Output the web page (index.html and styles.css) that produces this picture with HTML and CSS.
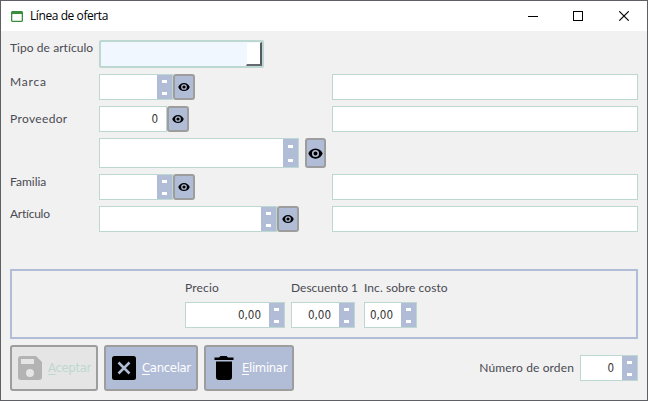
FILE: index.html
```html
<!DOCTYPE html>
<html lang="es">
<head>
<meta charset="utf-8">
<title>Línea de oferta</title>
<link rel="stylesheet" href="styles.css">
</head>
<body>
<svg width="0" height="0" class="defs">
  <symbol id="eye" viewBox="0 0 24 24"><path fill-rule="evenodd" d="M12 3.8C6.5 3.8 2.2 7.3 0.5 12c1.7 4.7 6 8.2 11.5 8.2s9.800-3.500 11.500-8.200C21.800 7.300 17.500 3.800 12 3.800zM12 17.700a5.700 5.700 0 1 1 0-11.400 5.700 5.700 0 0 1 0 11.400zM12 8.800a3.200 3.200 0 1 0 0 6.400 3.200 3.200 0 0 0 0-6.400z"/></symbol>
</svg>
<div class="window">
  <header class="titlebar">
    <svg class="app-icon" width="12" height="11" viewBox="0 0 12 11"><path fill="#388e3c" fill-rule="evenodd" d="M1 0h10l1 1v9l-1 1H1l-1-1V1zM1.300 3v6.700h9.400V3z"/></svg>
    <span class="title">Línea de oferta</span>
    <svg class="controls" width="102" height="10" viewBox="0 0 102 10" fill="none" stroke="#000">
      <path d="M0 5.500h10" shape-rendering="crispEdges"/><path d="M45.500.5h9v9h-9z" shape-rendering="crispEdges"/><path d="M91.300.3l9.400 9.400M100.700.3l-9.400 9.400" stroke-width="1.100"/>
    </svg>
  </header>
  <main class="form">
    <div class="row combo-row"><label class="w-tipo">Tipo de artículo</label><div class="combo"><i></i></div></div>
    <div class="row"><label class="w-marca">Marca</label><div class="field f74"><i class="spin"></i></div><button class="look"><svg><use href="#eye"/></svg></button><div class="field wide"></div></div>
    <div class="row"><label class="w-prov">Proveedor</label><div class="field f68"><span>0</span></div><button class="look"><svg><use href="#eye"/></svg></button><div class="field wide"></div></div>
    <div class="row tall"><label></label><div class="field f200"><i class="spin"></i></div><button class="look big"><svg><use href="#eye"/></svg></button></div>
    <div class="row"><label class="w-fam">Familia</label><div class="field f74"><i class="spin"></i></div><button class="look"><svg><use href="#eye"/></svg></button><div class="field wide"></div></div>
    <div class="row"><label class="w-art">Artículo</label><div class="field f178"><i class="spin"></i></div><button class="look"><svg><use href="#eye"/></svg></button><div class="field wide"></div></div>
  </main>
  <section class="prices">
    <div class="price precio"><label>Precio</label><div class="field"><span>0,00</span><i class="spin"></i></div></div>
    <div class="price descuento"><label>Descuento 1</label><div class="field"><span>0,00</span><i class="spin"></i></div></div>
    <div class="price inc"><label>Inc. sobre costo</label><div class="field"><span>0,00</span><i class="spin"></i></div></div>
  </section>
  <footer class="actions">
    <button class="btn accept"><svg width="24" height="24" viewBox="0 0 24 24"><path fill="#b3b3b3" fill-rule="evenodd" d="M3 0h15l6 6v15q0 3-3 3H3q-3 0-3-3V3Q0 0 3 0zM3 3v5h13V3zM12 13a4 4 0 1 0 0 8 4 4 0 0 0 0-8z"/></svg><span><u>A</u>ceptar</span></button>
    <button class="btn cancel"><svg width="24" height="24" viewBox="0 0 24 24"><rect width="24" height="24" rx="2.500"/><path d="M6.500 6.500l11 11M17.500 6.500l-11 11" stroke="#b1bcd7" stroke-width="2.500"/></svg><span><u>C</u>ancelar</span></button>
    <button class="btn remove"><svg width="20" height="24" viewBox="0 0 20 24"><path d="M.5 1.500H5L6.500 0h6L14 1.500h5.500V4H.5zM2 5.500h16V21q0 3-3 3H5q-3 0-3-3z"/></svg><span><u>E</u>liminar</span></button>
    <label>Número de orden</label>
    <div class="field order"><span>0</span><i class="spin"></i></div>
  </footer>
</div>
</body>
</html>
```
FILE: styles.css
```css
* { box-sizing: border-box; }
body { margin: 0; overflow: hidden; }
.defs { display: none; }
.window {
  width: 648px; height: 401px; background: #f1f1f1;
  border: 1px solid #5f6065;
  font: 12px/16px Lato, sans-serif; color: #4a4a52;
}
.titlebar { height: 30px; background: #fff; display: flex; align-items: center; padding: 0 17px 0 10px; }
.title { font: 12px/16px "Open Sans", sans-serif; color: #000; margin-left: 7px; letter-spacing: -.42px; }
.controls { margin-left: auto; }
.form { padding: 9px 9px 0; }
.row { display: flex; height: 26px; margin-bottom: 6px; }
.row label { width: 89px; flex: none; white-space: nowrap; }
.row .w-tipo { letter-spacing: .06px; }
.row .w-marca { letter-spacing: .8px; }
.row .w-prov { letter-spacing: .35px; padding-top: 5px; }
.row .w-art { letter-spacing: -.25px; }
.precio label { letter-spacing: .15px; }
.inc label { letter-spacing: .07px; }
.combo-row { height: 28px; }
.tall { height: 30px; }
.combo { width: 165px; border: 2px solid #bdd8d1; border-radius: 2px; background: #f0f7ff; display: flex; justify-content: flex-end; }
.combo i { width: 16px; background: #fff; border: 1px solid #f0f7ff; border-right: 2px solid #555960; border-bottom: 2px solid #666a70; }
.field { height: 100%; background: #fff; border: 1px solid #bdd8d1; display: flex; justify-content: flex-end; align-items: center; flex: none; }
.field span { font: 11.500px/16px "DejaVu Sans Condensed", "DejaVu Sans", sans-serif; font-stretch: condensed; color: #333; margin-right: 8px; }
.spin { width: 15px; height: 100%; background: #b1bcd7; display: flex; flex-direction: column; justify-content: space-between; padding: 5px 5px 4px; }
.spin::before, .spin::after { content: ""; width: 5px; height: 3px; background: #fff; }
.tall .spin { padding: 6px 5px 5px; }
.f74 { width: 74px; }
.f68 { width: 68px; }
.f178 { width: 178px; }
.f200 { width: 200px; }
.wide { width: 306px; margin-left: auto; }
button { padding: 0; border: 2px solid #9d9d9d; border-radius: 3px; background: #b1bcd7; }
.look { width: 22px; display: flex; align-items: center; justify-content: center; }
.look svg { width: 12px; height: 12px; }
.look.big { width: 21px; margin-left: 6px; }
.look.big svg { width: 15px; height: 15px; flex: none; }
.prices { height: 70px; margin: 37px 9px 0; border: 2px solid #b1bcd7; display: flex; padding: 9px 0 0 173px; }
.form .row:last-child { margin-bottom: 0; }
.price { width: 100px; margin-right: 6px; }
.price label { display: block; height: 22px; white-space: nowrap; }
.price .field { height: 26px; }
.descuento { width: 64px; margin-right: 9px; }
.inc { width: 53px; }
.actions { display: flex; align-items: center; height: 46px; margin: 6px 9px 0; }
.btn { height: 46px; display: flex; align-items: center; margin-right: 6px; padding-left: 6px; font: 13px/18px "DejaVu Sans Condensed", "DejaVu Sans", sans-serif; font-stretch: condensed; letter-spacing: -.35px; color: #fff; }
.btn span { margin-left: 6px; white-space: nowrap; }
.btn u { text-underline-offset: 2px; }
.accept { width: 88px; background: #e5e5e5; color: #bdd8d1; }
.cancel { width: 94px; }
.remove { width: 90px; padding-left: 8px; }
.remove span { margin-left: 8px; }
.actions label { margin-left: auto; margin-right: 6px; white-space: nowrap; letter-spacing: .13px; }
.actions .field { width: 58px; height: 26px; }
```
